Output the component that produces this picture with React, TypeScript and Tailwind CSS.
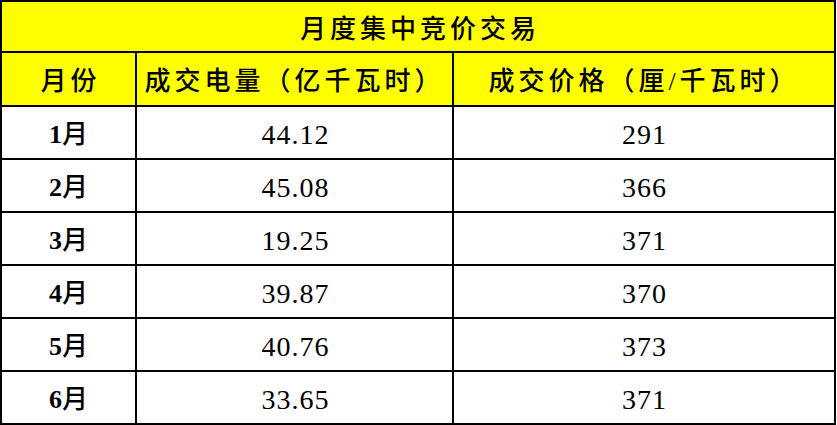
import React from "react";

const rows = [
  { month: "1", volume: "44.12", price: "291" },
  { month: "2", volume: "45.08", price: "366" },
  { month: "3", volume: "19.25", price: "371" },
  { month: "4", volume: "39.87", price: "370" },
  { month: "5", volume: "40.76", price: "373" },
  { month: "6", volume: "33.65", price: "371" },
];

const cjk = "font-['Liberation_Serif','Noto_Sans_CJK_SC',serif]";

const App = () => {
  return (
    <div className="w-[837px] h-[425px] bg-white">
      <div className="grid w-[836px] grid-cols-[133px_315px_380px] grid-rows-[49px_52px_repeat(6,51px)] gap-[2px] bg-black p-[2px] text-black">
        <div className={`col-span-3 flex items-center justify-center bg-[#ffff00] pt-[5px] pl-[4px] text-[26px] font-medium tracking-[4px] ${cjk}`}>
          月度集中竞价交易
        </div>
        <div className={`flex items-center justify-center bg-[#ffff00] pt-[5px] pl-[4px] text-[26px] font-medium tracking-[4px] ${cjk}`}>
          月份
        </div>
        <div className={`flex items-center justify-center bg-[#ffff00] pt-[5px] text-[26px] font-medium tracking-[4px] ${cjk}`}>
          成交电量（亿千瓦时）
        </div>
        <div className={`flex items-center justify-center bg-[#ffff00] pt-[5px] text-[26px] font-medium tracking-[4px] ${cjk}`}>
          成交价格（厘/千瓦时）
        </div>
        {rows.map((r) => (
          <React.Fragment key={r.month}>
            <div className={`flex items-center justify-center bg-white pt-[4px] text-[26px] font-medium ${cjk}`}>
              <span className="font-bold">{r.month}</span>月
            </div>
            <div className={`flex items-center justify-center bg-white pt-[4px] pl-[2px] text-[28px] tracking-[1px] ${cjk}`}>
              {r.volume}
            </div>
            <div className={`flex items-center justify-center bg-white pt-[4px] pl-[1px] text-[28px] tracking-[1px] ${cjk}`}>
              {r.price}
            </div>
          </React.Fragment>
        ))}
      </div>
    </div>
  );
};

export default App;
